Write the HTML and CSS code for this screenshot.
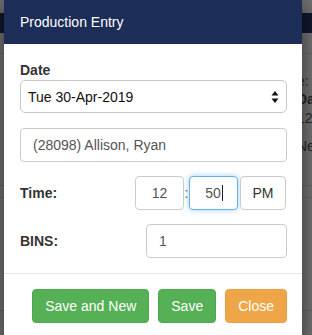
FILE: index.html
```html
<!DOCTYPE html>
<html>
<head>
<meta charset="utf-8">
<link rel="stylesheet" href="styles.css">
</head>
<body>
<div class="page">
  <div class="navbar"></div>
  <div class="bg-rule bg-rule-1"></div>
  <div class="bg-text">
    <div class="bg-line">e: Sa</div>
    <div class="bg-line bold">Days:</div>
    <div class="bg-line">120</div>
    <div class="bg-line">New</div>
  </div>
  <div class="bg-rule bg-rule-2"></div>
  <div class="bg-rule bg-rule-3"></div>
  <div class="bg-rule bg-rule-4"></div>
</div>

<div class="modal">
  <div class="modal-header">
    <h4 class="modal-title">Production Entry</h4>
  </div>
  <div class="modal-body">
    <div class="group">
      <label class="label block">Date</label>
      <div class="select">
        <span>Tue 30-Apr-2019</span>
        <svg class="arrows" width="8" height="12" viewBox="0 0 8 12"><path d="M4 0 L7.5 4.5 H0.5 Z M4 12 L7.5 7.5 H0.5 Z" fill="#111"/></svg>
      </div>
    </div>
    <div class="group">
      <input class="input" type="text" value="(28098) Allison, Ryan">
    </div>
    <div class="group row">
      <label class="label">Time:</label>
      <div class="time">
        <input class="input t-box" type="text" value="12">
        <span class="colon">:</span>
        <div class="input t-box focus"><span>50</span><span class="caret"></span></div>
        <div class="input t-box ampm">PM</div>
      </div>
    </div>
    <div class="group row last">
      <label class="label">BINS:</label>
      <input class="input bins" type="text" value="1">
    </div>
  </div>
  <div class="modal-footer">
    <button class="btn green">Save and New</button>
    <button class="btn green">Save</button>
    <button class="btn orange">Close</button>
  </div>
</div>
</body>
</html>
```
FILE: styles.css
```css
html, body {
  margin: 0;
  padding: 0;
  width: 312px;
  height: 335px;
  overflow: hidden;
  background: #6d6d6d;
  font-family: "Liberation Sans", Arial, sans-serif;
  font-size: 14px;
  color: #333;
}
.page {
  position: relative;
  height: 335px;
  padding-top: 13px;
  box-sizing: border-box;
}
.navbar {
  height: 20px;
  background: #10172a;
}
.bg-rule {
  height: 0;
  border-top: 1px solid #626262;
}
.bg-rule-1 { margin-top: 20px; }
.bg-text {
  margin-left: 297px;
  padding-top: 18px;
  white-space: nowrap;
  overflow: hidden;
  width: 15px;
  color: #262626;
  font-size: 14px;
}
.bg-line { height: 18px; line-height: 18px; }
.bg-line:nth-child(3) { margin-top: 1px; }
.bg-line:nth-child(4) { margin-top: 10px; }
.bold { font-weight: bold; }
.bg-rule-2 { margin-top: 30px; }
.bg-rule-3 { margin-top: 11px; }
.bg-rule-4 { margin-top: 112px; }

.modal {
  position: absolute;
  left: 4px;
  top: 0;
  width: 298px;
  background: #fff;
  box-shadow: 0 5px 15px rgba(0,0,0,0.5);
}
.modal-header {
  background: #1c2d57;
  padding: 12px 16px;
  height: 20px;
}
.modal-title {
  margin: 0;
  font-size: 14px;
  font-weight: normal;
  line-height: 20px;
  color: #fff;
}
.modal-body {
  padding: 16px 15px 15px 16px;
}
.group { margin-bottom: 14px; }
.group:first-child { margin-bottom: 15px; }
.group.last { margin-bottom: 0; }
.label {
  font-weight: bold;
  line-height: 20px;
  color: #333;
}
.block { display: block; }
.select {
  height: 33px;
  box-sizing: border-box;
  border: 1px solid #c8c8c8;
  border-radius: 5px;
  display: flex;
  align-items: center;
  justify-content: space-between;
  padding: 0 7px 0 7px;
  color: #111;
  font-size: 14px;
}
.arrows { margin-right: 0; }
.input {
  display: block;
  width: 100%;
  height: 34px;
  box-sizing: border-box;
  border: 1px solid #ccc;
  border-radius: 4px;
  padding: 0 12px;
  font-family: "Liberation Sans", Arial, sans-serif;
  font-size: 14px;
  color: #555;
  background: #fff;
  outline: none;
}
.row {
  display: flex;
  align-items: center;
  justify-content: space-between;
}
.time {
  display: flex;
  align-items: center;
  margin-right: 1px;
}
.t-box {
  width: 49px;
  padding: 0;
  text-align: center;
  display: flex;
  align-items: center;
  justify-content: center;
}
.colon {
  width: 5px;
  text-align: center;
  color: #555;
}
.focus {
  border-color: #66afe9;
  box-shadow: 0 0 6px rgba(102,175,233,0.6);
  padding-left: 1px;
}
.caret {
  display: inline-block;
  width: 1px;
  height: 16px;
  background: #222;
  margin-left: 1px;
}
.ampm {
  width: 46px;
  margin-left: 2px;
  color: #333;
}
.bins {
  width: 141px;
}
.modal-footer {
  border-top: 1px solid #e5e5e5;
  padding: 15px 15px 15px 15px;
  display: flex;
  justify-content: flex-end;
  gap: 9px;
}
.btn {
  height: 34px;
  padding: 0 12px;
  border-radius: 4px;
  font-family: "Liberation Sans", Arial, sans-serif;
  font-size: 14px;
  color: #fff;
  border: 1px solid transparent;
}
.green {
  background: #56b055;
  border-color: #4ea84e;
}
.orange {
  background: #efa648;
  border-color: #eaa040;
}
```
